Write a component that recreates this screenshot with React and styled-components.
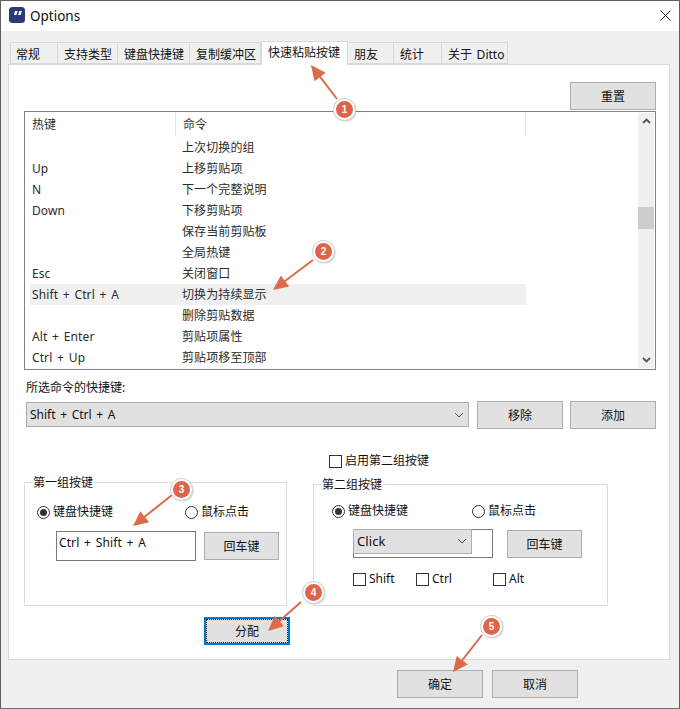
import React from "react";
import styled, { createGlobalStyle } from "styled-components";

const Global = createGlobalStyle`
  html, body { margin: 0; padding: 0; background: #fff; }
  * { box-sizing: border-box; }
`;

const Win = styled.div`
  position: relative;
  width: 680px;
  height: 709px;
  overflow: hidden;
  background: #f0f0f0;
  border: 1px solid #5f5f5f;
  border-bottom-color: #6e6e6e;
  font: 12px/16px "Noto Sans", "Noto Sans CJK SC", sans-serif;
  word-spacing: 1.5px;
  color: #111;
`;
const TitleBar = styled.div`
  height: 30px;
  background: #fff;
  display: flex;
  align-items: center;
  padding: 0 8px 2px 8px;
  gap: 5px;
  font-size: 13.5px;
`;
const TitleText = styled.span`
  flex: 1;
  margin-top: 1px;
`;
const TabStrip = styled.div`
  height: 33px;
  padding: 9px 0 0 9px;
  display: flex;
  align-items: flex-end;
`;
const Tab = styled.div`
  width: ${(p) => p.$w}px;
  height: ${(p) => (p.$active ? 24 : 22)}px;
  margin-bottom: ${(p) => (p.$active ? -1 : 0)}px;
  background: ${(p) => (p.$active ? "#fff" : "#f0f0f0")};
  border: 1px solid #d9d9d9;
  border-bottom: ${(p) => (p.$active ? "none" : "1px solid #d9d9d9")};
  border-left: ${(p) => (p.$first || p.$active ? "1px solid #d9d9d9" : "none")};
  padding-left: ${(p) => (p.$first ? 5 : p.$active ? 6 : 6)}px;
  line-height: ${(p) => (p.$active ? 21 : 23)}px;
  position: relative;
  z-index: ${(p) => (p.$active ? 1 : 0)};
  white-space: nowrap;
`;
const Panel = styled.div`
  width: 662px;
  height: 596px;
  margin-left: 7px;
  background: #fff;
  border: 1px solid #d9d9d9;
  padding: 17px 12px 0 15px;
`;
const ResetRow = styled.div`
  display: flex;
  justify-content: flex-end;
  height: 29px;
  padding-right: 1px;
`;
const Button = styled.div`
  width: ${(p) => p.$w || 86}px;
  height: 28px;
  padding-top: 1px;
  background: #e1e1e1;
  border: 1px solid #adadad;
  display: flex;
  align-items: center;
  justify-content: center;
  flex: none;
`;
const AssignButton = styled(Button)`
  border: 2px solid #0078d7;
  outline: 1px dotted #111;
  outline-offset: -3px;
`;
const List = styled.div`
  width: 632px;
  height: 259px;
  border: 1px solid #828282;
  display: flex;
  padding-right: 1px;
`;
const ListBody = styled.div`
  flex: 1;
  overflow: hidden;
`;
const ListHead = styled.div`
  display: grid;
  grid-template-columns: 151px 350px;
  height: 25px;
  color: #333;
`;
const HeadCell = styled.div`
  height: 24px;
  padding: 5px 0 0 7px;
  border-right: 1px solid #e3e3e3;
`;
const Row = styled.div`
  display: grid;
  grid-template-columns: 145px 351px;
  height: 21px;
  margin-left: 5px;
  width: 496px;
  line-height: 22px;
  background: ${(p) => (p.$on ? "#f0f0f0" : "transparent")};
  color: #2b2b2b;
`;
const Cell = styled.div`
  padding-left: ${(p) => p.$pad}px;
  white-space: nowrap;
  letter-spacing: 0.1px;
`;
const Scrollbar = styled.div`
  width: 16px;
  margin-top: 1px;
  margin-bottom: 1px;
  background: #f0f0f0;
  display: flex;
  flex-direction: column;
  align-items: center;
`;
const ScrollArrow = styled.div`
  height: 16px;
  flex: none;
  display: flex;
  align-items: center;
  justify-content: center;
`;
const Thumb = styled.div`
  width: 16px;
  height: 22px;
  margin-top: 78px;
  background: #cdcdcd;
`;
const Spacer = styled.div`
  flex: 1;
`;
const ShortcutLabel = styled.div`
  margin: 10px 0 0 2px;
  height: 16px;
`;
const ShortcutRow = styled.div`
  display: flex;
  align-items: flex-start;
  margin-top: 5px;
  padding-left: 2px;
  gap: 7px;
`;
const ComboBox = styled.div`
  width: ${(p) => p.$w}px;
  height: ${(p) => p.$h}px;
  background: #e1e1e1;
  border: 1px solid #adadad;
  display: flex;
  align-items: center;
  justify-content: space-between;
  padding: 0 4px 0 3px;
  flex: none;
`;
const MainCombo = styled(ComboBox)`
  margin: 1px 1px 0 0;
`;
const InnerCombo = styled(ComboBox)`
  margin: -4px 0 0 -3px;
  padding-bottom: 2px;
  font-size: 13px;
`;
const EnableRow = styled.div`
  display: flex;
  align-items: center;
  gap: 3px;
  margin: 24px 0 0 305px;
  height: 16px;
`;
const CheckBox = styled.span`
  width: 13px;
  height: 13px;
  background: #fff;
  border: 1px solid #333;
  flex: none;
`;
const Groups = styled.div`
  display: flex;
  align-items: flex-end;
  margin-top: 13px;
  gap: 26px;
`;
const Group = styled.div`
  position: relative;
  width: ${(p) => p.$w}px;
  height: ${(p) => p.$h}px;
  border: 1px solid #dcdcdc;
  padding: 0 0 0 ${(p) => p.$pl}px;
`;
const Legend = styled.span`
  position: absolute;
  left: 7px;
  top: -8px;
  padding: 0 1px;
  background: #fff;
  line-height: 16px;
  white-space: nowrap;
`;
const RadioRow = styled.div`
  display: flex;
  height: 16px;
  margin-top: ${(p) => p.$mt}px;
`;
const RadioItem = styled.label`
  display: flex;
  align-items: center;
  gap: 3px;
  width: ${(p) => p.$w}px;
  flex: none;
`;
const RadioDot = styled.span`
  width: 13px;
  height: 13px;
  border-radius: 50%;
  border: 1px solid #333;
  background: #fff;
  display: flex;
  align-items: center;
  justify-content: center;
  flex: none;
  &::after {
    content: "";
    width: 7px;
    height: 7px;
    border-radius: 50%;
    background: ${(p) => (p.$on ? "#333" : "transparent")};
  }
`;
const KeyRow = styled.div`
  display: flex;
  align-items: flex-start;
  margin: ${(p) => p.$mt}px 0 0 ${(p) => p.$ml}px;
  gap: ${(p) => p.$gap}px;
`;
const KeyInput = styled.div`
  width: 140px;
  height: ${(p) => p.$h}px;
  border: 1px solid #7a7a7a;
  background: #fff;
  padding: 3px 0 0 2px;
  line-height: 16px;
  letter-spacing: 0.1px;
  flex: none;
`;
const ButtonNudge = styled.div`
  margin-top: 1px;
`;
const Modifiers = styled.div`
  display: flex;
  margin: 13px 0 0 21px;
`;
const ModItem = styled.label`
  display: flex;
  align-items: center;
  gap: 3px;
  width: ${(p) => p.$w}px;
  flex: none;
  height: 16px;
`;
const AssignRow = styled.div`
  margin: 11px 0 0 180px;
`;
const Footer = styled.div`
  display: flex;
  gap: 9px;
  margin: 10px 0 0 396px;
`;
const Overlay = styled.svg`
  position: absolute;
  left: -1px;
  top: -1px;
  pointer-events: none;
`;
const Badge = styled.div`
  position: absolute;
  left: ${(p) => p.$x - 11}px;
  top: ${(p) => p.$y - 11}px;
  width: 21px;
  height: 21px;
  border-radius: 50%;
  background: #df6448;
  border: 2px solid #fff;
  box-shadow: 0 0 0 1px #d5d5d5, 1px 1px 2px rgba(0, 0, 0, 0.35);
  color: #fff;
  font: 700 10px/17px "Liberation Sans", sans-serif;
  text-align: center;
`;

const rows = [
  ["", "上次切换的组"],
  ["Up", "上移剪贴项"],
  ["N", "下一个完整说明"],
  ["Down", "下移剪贴项"],
  ["", "保存当前剪贴板"],
  ["", "全局热键"],
  ["Esc", "关闭窗口"],
  ["Shift + Ctrl + A", "切换为持续显示", true],
  ["", "删除剪贴数据"],
  ["Alt + Enter", "剪贴项属性"],
  ["Ctrl + Up", "剪贴项移至顶部"],
];
const tabs = [
  ["常规", 48],
  ["支持类型", 60],
  ["键盘快捷键", 72],
  ["复制缓冲区", 71],
  ["快速粘贴按键", 87],
  ["朋友", 46],
  ["统计", 48],
  ["关于 Ditto", 66],
];
const arrows = [
  [337, 99, 311, 65],
  [313, 260, 273, 290],
  [172, 495, 133, 526],
  [301, 602, 268, 631],
  [482, 635, 453, 672],
];
const badges = [
  [344, 109, 1],
  [323, 251, 2],
  [181, 489, 3],
  [313, 592, 4],
  [491, 626, 5],
];

const Chevron = ({ up }) => (
  <svg width="9" height="6" viewBox="0 0 9 6">
    <path d={up ? "M1 5 L4.5 1.5 L8 5" : "M1 1 L4.5 4.5 L8 1"} fill="none" stroke="#555" strokeWidth="1.8" />
  </svg>
);
const ComboArrow = () => (
  <svg width="10" height="6" viewBox="0 0 10 6">
    <path d="M1 1 L5 5 L9 1" fill="none" stroke="#555" strokeWidth="1" />
  </svg>
);
const Logo = () => (
  <svg width="16" height="16" viewBox="0 0 16 16">
    <rect width="16" height="16" rx="3.5" fill="#2e3a78" />
    <path d="M6 4 H8.6 L7.4 8 H5 Z M10.2 4 H12.8 L11.6 8 H9.2 Z" fill="#fff" />
  </svg>
);
const CloseIcon = () => (
  <svg width="11" height="11" viewBox="0 0 11 11">
    <path d="M.5 .5 L10.5 10.5 M10.5 .5 L.5 10.5" stroke="#111" strokeWidth="1" />
  </svg>
);

function arrowHead([x1, y1, x2, y2]) {
  const len = Math.hypot(x2 - x1, y2 - y1);
  const ux = (x2 - x1) / len;
  const uy = (y2 - y1) / len;
  const bx = x2 - ux * 15;
  const by = y2 - uy * 15;
  return `${x2},${y2} ${bx - uy * 7},${by + ux * 7} ${bx + uy * 7},${by - ux * 7}`;
}

export default function App() {
  return (
    <Win>
      <Global />
      <TitleBar>
        <Logo />
        <TitleText>Options</TitleText>
        <CloseIcon />
      </TitleBar>
      <TabStrip>
        {tabs.map(([t, w], i) => (
          <Tab key={t} $w={w} $first={i === 0} $active={i === 4}>
            {t}
          </Tab>
        ))}
      </TabStrip>
      <Panel>
        <ResetRow>
          <Button>重置</Button>
        </ResetRow>
        <List>
          <ListBody>
            <ListHead>
              <HeadCell>热键</HeadCell>
              <HeadCell>命令</HeadCell>
            </ListHead>
            {rows.map(([k, c, on]) => (
              <Row key={c} $on={on}>
                <Cell $pad={2}>{k}</Cell>
                <Cell $pad={7}>{c}</Cell>
              </Row>
            ))}
          </ListBody>
          <Scrollbar>
            <ScrollArrow><Chevron up /></ScrollArrow>
            <Thumb />
            <Spacer />
            <ScrollArrow><Chevron /></ScrollArrow>
          </Scrollbar>
        </List>
        <ShortcutLabel>所选命令的快捷键:</ShortcutLabel>
        <ShortcutRow>
          <MainCombo $w={443} $h={25}>
            Shift + Ctrl + A
            <ComboArrow />
          </MainCombo>
          <Button>移除</Button>
          <Button>添加</Button>
        </ShortcutRow>
        <EnableRow>
          <CheckBox />
          启用第二组按键
        </EnableRow>
        <Groups>
          <Group $w={263} $h={124} $pl={12}>
            <Legend>第一组按键</Legend>
            <RadioRow $mt={21}>
              <RadioItem $w={148}><RadioDot $on />键盘快捷键</RadioItem>
              <RadioItem $w={80}><RadioDot />鼠标点击</RadioItem>
            </RadioRow>
            <KeyRow $mt={11} $ml={19} $gap={8}>
              <KeyInput $h={30}>Ctrl + Shift + A</KeyInput>
              <ButtonNudge><Button $w={75}>回车键</Button></ButtonNudge>
            </KeyRow>
          </Group>
          <Group $w={295} $h={122} $pl={18}>
            <Legend>第二组按键</Legend>
            <RadioRow $mt={18}>
              <RadioItem $w={140}><RadioDot $on />键盘快捷键</RadioItem>
              <RadioItem $w={80}><RadioDot />鼠标点击</RadioItem>
            </RadioRow>
            <KeyRow $mt={10} $ml={21} $gap={14}>
              <KeyInput $h={29}>
                <InnerCombo $w={119} $h={25}>
                  Click
                  <ComboArrow />
                </InnerCombo>
              </KeyInput>
              <ButtonNudge><Button $w={75}>回车键</Button></ButtonNudge>
            </KeyRow>
            <Modifiers>
              <ModItem $w={63}><CheckBox />Shift</ModItem>
              <ModItem $w={77}><CheckBox />Ctrl</ModItem>
              <ModItem $w={50}><CheckBox />Alt</ModItem>
            </Modifiers>
          </Group>
        </Groups>
        <AssignRow>
          <AssignButton>分配</AssignButton>
        </AssignRow>
      </Panel>
      <Footer>
        <Button>确定</Button>
        <Button>取消</Button>
      </Footer>
      <Overlay width="680" height="709" viewBox="0 0 680 709">
        {arrows.map((a) => {
          const len = Math.hypot(a[2] - a[0], a[3] - a[1]);
          const ex = a[2] - ((a[2] - a[0]) / len) * 10;
          const ey = a[3] - ((a[3] - a[1]) / len) * 10;
          return (
            <g key={a[0]} fill="#dd6a4a" stroke="#dd6a4a">
              <line x1={a[0]} y1={a[1]} x2={ex} y2={ey} strokeWidth="2" />
              <polygon points={arrowHead(a)} stroke="none" />
            </g>
          );
        })}
      </Overlay>
      {badges.map(([x, y, n]) => (
        <Badge key={n} $x={x} $y={y}>{n}</Badge>
      ))}
    </Win>
  );
}
